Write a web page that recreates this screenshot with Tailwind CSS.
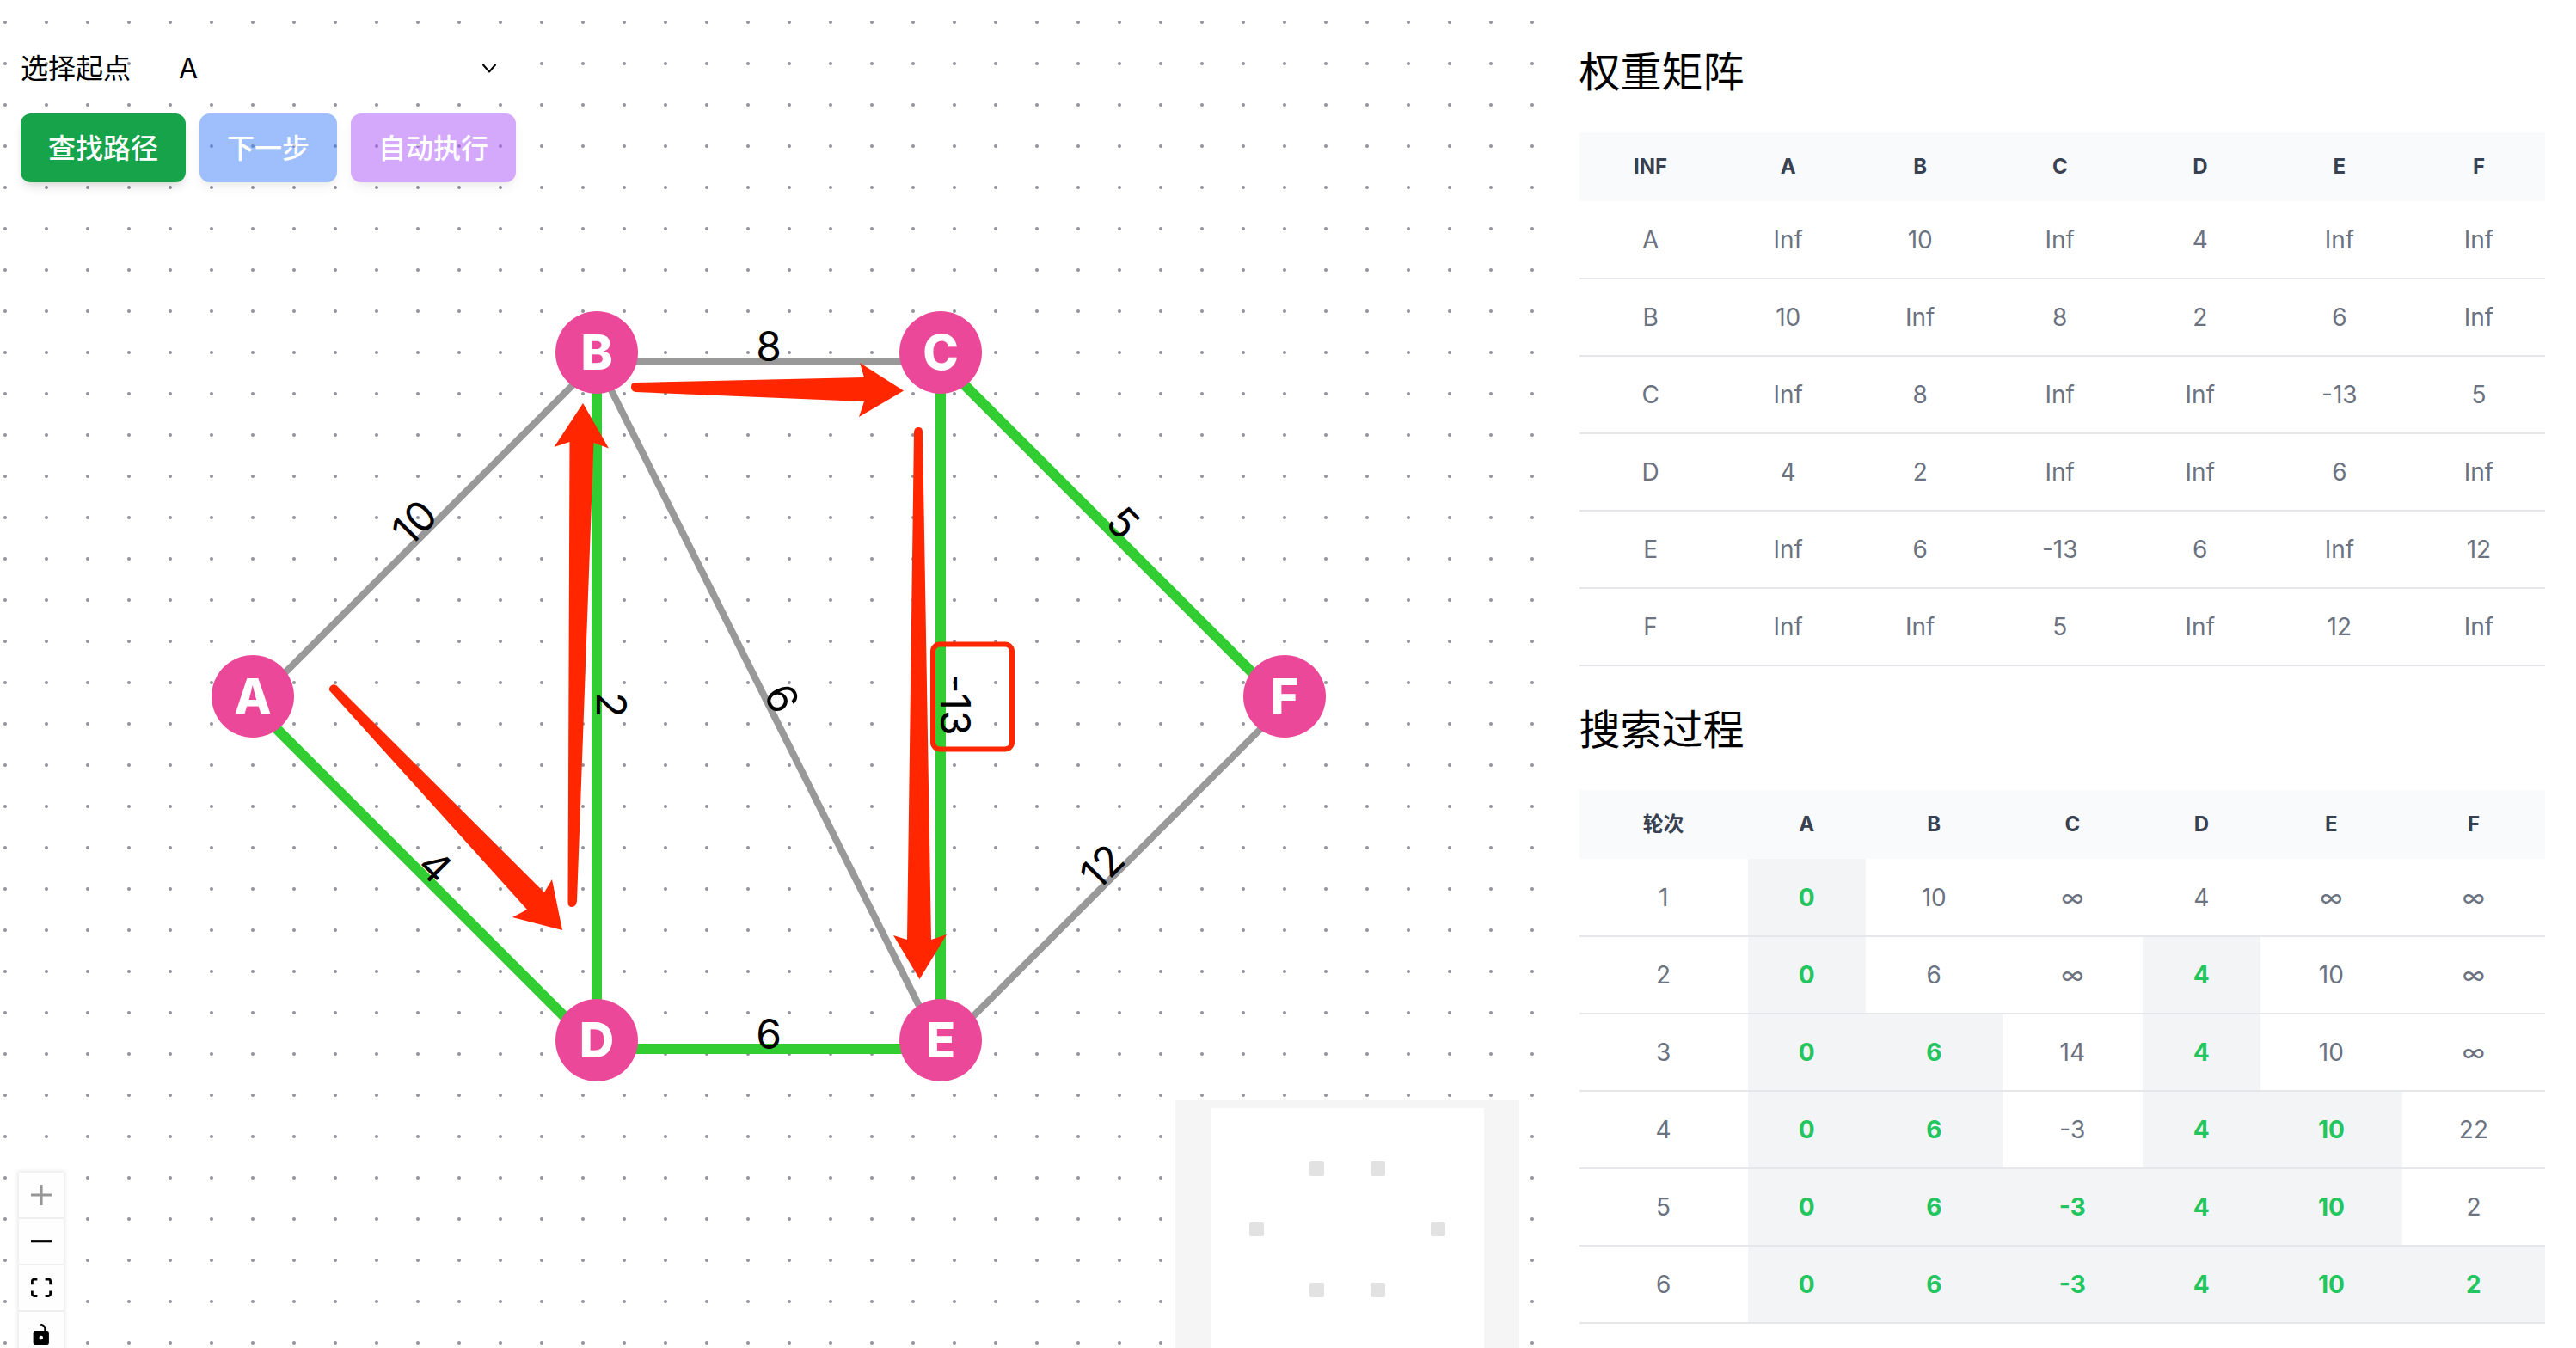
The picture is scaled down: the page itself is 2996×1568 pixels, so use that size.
<!DOCTYPE html>
<html lang="zh-CN">
<head>
<meta charset="utf-8">
<meta name="viewport" content="width=device-width, initial-scale=1">
<title>最短路径</title>
<script src="https://cdn.jsdelivr.net/npm/@tailwindcss/browser@4"></script>
</head>
<body class="bg-white text-black font-['Inter','Noto_Sans_CJK_SC',sans-serif]">
<div class="flex h-screen overflow-hidden">

  <!-- Graph canvas -->
  <main class="relative w-3/5 h-full overflow-hidden">
    <svg class="absolute inset-0 w-full h-full" aria-hidden="true">
      <defs>
        <pattern id="dots" x="-18" y="2" width="48" height="48" patternUnits="userSpaceOnUse">
          <circle cx="24" cy="24" r="2" fill="#91919a"/>
        </pattern>
      </defs>
      <rect width="100%" height="100%" fill="url(#dots)"/>
    </svg>

    <!-- Edges and weights -->
    <svg class="absolute inset-0 w-full h-full" role="img" aria-label="加权图">
      <g stroke="#999" stroke-width="8">
        <path d="M294 820L694 420"/>
        <path d="M694 420H1094"/>
        <path d="M694 420L1094 1220"/>
        <path d="M1094 1220L1494 820"/>
      </g>
      <g stroke="#32cd32" stroke-width="12">
        <path d="M294 820L694 1220"/>
        <path d="M694 420V1220"/>
        <path d="M694 1220H1094"/>
        <path d="M1094 420V1220"/>
        <path d="M1094 420L1494 820"/>
      </g>
      <g class="text-5xl" fill="#000" text-anchor="middle">
        <text transform="translate(494 620) rotate(-45)">10</text>
        <text transform="translate(894 420)">8</text>
        <text transform="translate(494 1020) rotate(45)">4</text>
        <text transform="translate(694 820) rotate(90)">2</text>
        <text transform="translate(894 820) rotate(63.4)">6</text>
        <text transform="translate(894 1220)">6</text>
        <text transform="translate(1094 820) rotate(90)">-13</text>
        <text transform="translate(1294 620) rotate(45)">5</text>
        <text transform="translate(1294 1020) rotate(-45)">12</text>
      </g>
    </svg>

    <!-- Nodes -->
    <div class="text-[56px] leading-none font-extrabold text-white">
      <div class="absolute left-[246px] top-[762px] size-24 rounded-full bg-[#ec4899] flex items-center justify-center">A</div>
      <div class="absolute left-[646px] top-[362px] size-24 rounded-full bg-[#ec4899] flex items-center justify-center">B</div>
      <div class="absolute left-[1046px] top-[362px] size-24 rounded-full bg-[#ec4899] flex items-center justify-center">C</div>
      <div class="absolute left-[646px] top-[1162px] size-24 rounded-full bg-[#ec4899] flex items-center justify-center">D</div>
      <div class="absolute left-[1046px] top-[1162px] size-24 rounded-full bg-[#ec4899] flex items-center justify-center">E</div>
      <div class="absolute left-[1446px] top-[762px] size-24 rounded-full bg-[#ec4899] flex items-center justify-center">F</div>
    </div>

    <!-- Route arrows and highlight -->
    <svg class="absolute inset-0 w-full h-full pointer-events-none" aria-hidden="true">
      <g fill="#ff2600">
        <path d="M391 797L633 1038L642 1023L654 1082L596 1067L613 1058L383 803A5.5 5.5 0 0 1 391 797Z"/>
        <path d="M660.500 1049L662.500 514L644.500 520L678 469L708 521.500L690.500 515L671 1048Q670 1055 665 1055Q660.500 1055 660.500 1049Z"/>
        <path d="M739 445L1005 439L1000 422L1051 454.500L999 485L1005 467L739 456Q734 455 734 450Q734 445 739 445Z"/>
        <path d="M1063 502L1055 1093L1039 1088L1069.500 1139L1101 1087L1083 1093L1073 502Q1073 497 1068 497Q1064 497 1063 502Z"/>
      </g>
      <rect x="1085" y="749.500" width="92" height="122" rx="8" fill="none" stroke="#ff2600" stroke-width="6"/>
    </svg>

    <!-- Toolbar -->
    <div class="absolute left-6 top-12 w-[576px] flex flex-col gap-5 text-[32px] leading-[48px]">
      <div class="flex items-center gap-8">
        <label for="start" class="shrink-0">选择起点</label>
        <div class="relative grow">
          <select id="start" class="block w-full h-16 appearance-none bg-white pl-6 pr-16 rounded-lg">
            <option selected>A</option><option>B</option><option>C</option><option>D</option><option>E</option><option>F</option>
          </select>
          <svg class="absolute right-5 top-5 size-6 pointer-events-none" viewBox="0 0 24 24" fill="none" stroke="#000" stroke-width="2" stroke-linecap="round" stroke-linejoin="round"><path d="M6 7.500L13 15.500L20 7.500"/></svg>
        </div>
      </div>
      <div class="flex gap-4 font-medium text-white">
        <button type="button" class="h-20 px-8 pt-0.5 rounded-xl bg-[#16a34a] shadow-[0_8px_12px_-2px_rgba(0,0,0,0.1),0_4px_8px_-4px_rgba(0,0,0,0.1)]">查找路径</button>
        <button type="button" disabled class="h-20 px-8 pt-0.5 rounded-xl bg-[#3f81fa] opacity-50 shadow-[0_8px_12px_-2px_rgba(0,0,0,0.1),0_4px_8px_-4px_rgba(0,0,0,0.1)]">下一步</button>
        <button type="button" disabled class="h-20 px-8 pt-0.5 rounded-xl bg-[#ab55fb] opacity-50 shadow-[0_8px_12px_-2px_rgba(0,0,0,0.1),0_4px_8px_-4px_rgba(0,0,0,0.1)]">自动执行</button>
      </div>
    </div>

    <!-- Zoom controls -->
    <div class="absolute left-[22px] -bottom-3 w-[52px] flex flex-col shadow-[0_0_4px_2px_rgba(0,0,0,0.08)]">
      <button type="button" disabled aria-label="放大" class="h-[54px] bg-[#fefefe] border-b-2 border-[#eee] flex items-center justify-center"><svg class="size-6 opacity-40" viewBox="0 0 32 32"><path d="M32 18.133H18.133V32h-4.266V18.133H0v-4.266h13.867V0h4.266v13.867H32z"/></svg></button>
      <button type="button" aria-label="缩小" class="h-[54px] bg-[#fefefe] border-b-2 border-[#eee] flex items-center justify-center"><svg class="w-6 h-1" viewBox="0 0 32 5"><path d="M0 0h32v4.2H0z"/></svg></button>
      <button type="button" aria-label="适应视图" class="h-[54px] bg-[#fefefe] border-b-2 border-[#eee] flex items-center justify-center"><svg class="size-6" viewBox="0 0 32 30"><path d="M3.692 4.63c0-.53.4-.938.939-.938h5.215V0H4.708C2.13 0 0 2.054 0 4.63v5.216h3.692V4.631zM27.354 0h-5.2v3.692h5.17c.53 0 .984.4.984.939v5.215H32V4.631A4.624 4.624 0 0027.354 0zm.954 24.83c0 .532-.4.94-.939.94h-5.215v3.768h5.215c2.577 0 4.631-2.13 4.631-4.707v-5.139h-3.692v5.139zm-23.677.94c-.531 0-.939-.4-.939-.94v-5.138H0v5.139c0 2.577 2.13 4.707 4.708 4.707h5.138V25.77H4.631z"/></svg></button>
      <button type="button" aria-label="锁定" class="h-[54px] bg-[#fefefe] border-b-2 border-[#eee] flex items-center justify-center"><svg class="size-6" viewBox="0 0 25 32"><path d="M21.333 10.667H19.81V7.619C19.81 3.429 16.38 0 12.19 0c-4.114 1.828-1.37 2.133.305 2.438 1.676.305 4.42 2.59 4.42 5.181v3.048H3.047A3.056 3.056 0 000 13.714v15.238A3.056 3.056 0 003.048 32h18.285a3.056 3.056 0 003.048-3.048V13.714a3.056 3.056 0 00-3.048-3.047zM12.19 24.533a3.056 3.056 0 01-3.047-3.047 3.056 3.056 0 013.047-3.048 3.056 3.056 0 013.048 3.048 3.056 3.056 0 01-3.048 3.047z"/></svg></button>
    </div>

    <!-- Minimap -->
    <svg class="absolute right-[31px] -bottom-3 w-[400px] h-[300px]" viewBox="0 0 400 300" role="img" aria-label="小地图">
      <rect width="400" height="300" fill="#f5f5f5"/>
      <rect x="41" y="9" width="318" height="281" fill="#fff"/>
      <g fill="#e2e2e2">
        <rect x="156" y="71" width="17" height="17" rx="2"/>
        <rect x="227" y="71" width="17" height="17" rx="2"/>
        <rect x="86" y="142" width="17" height="16" rx="2"/>
        <rect x="297" y="142" width="17" height="16" rx="2"/>
        <rect x="156" y="212" width="17" height="17" rx="2"/>
        <rect x="227" y="212" width="17" height="17" rx="2"/>
      </g>
    </svg>
  </main>

  <!-- Data panel -->
  <aside class="w-2/5 h-full overflow-hidden pt-[10px] pl-[39px] pr-9">
    <h2 class="pt-[42px] pb-[38px] text-5xl leading-[64px]">权重矩阵</h2>
    <table class="w-full table-fixed border-collapse text-center text-[28px] leading-10 text-[#6b7280]">
      <colgroup><col class="w-[166px]"><col class="w-[154px]"><col class="w-[153px]"><col class="w-[172px]"><col class="w-[154px]"><col class="w-[170px]"><col class="w-[154px]"></colgroup>
      <thead class="bg-[#f9fafb] text-2xl leading-8 text-[#374151]">
        <tr class="h-20"><th>INF</th><th>A</th><th>B</th><th>C</th><th>D</th><th>E</th><th>F</th></tr>
      </thead>
      <tbody>
        <tr class="h-[90px] border-b-2 border-[#e5e7eb]"><td>A</td><td>Inf</td><td>10</td><td>Inf</td><td>4</td><td>Inf</td><td>Inf</td></tr>
        <tr class="h-[90px] border-b-2 border-[#e5e7eb]"><td>B</td><td>10</td><td>Inf</td><td>8</td><td>2</td><td>6</td><td>Inf</td></tr>
        <tr class="h-[90px] border-b-2 border-[#e5e7eb]"><td>C</td><td>Inf</td><td>8</td><td>Inf</td><td>Inf</td><td>-13</td><td>5</td></tr>
        <tr class="h-[90px] border-b-2 border-[#e5e7eb]"><td>D</td><td>4</td><td>2</td><td>Inf</td><td>Inf</td><td>6</td><td>Inf</td></tr>
        <tr class="h-[90px] border-b-2 border-[#e5e7eb]"><td>E</td><td>Inf</td><td>6</td><td>-13</td><td>6</td><td>Inf</td><td>12</td></tr>
        <tr class="h-[90px] border-b-2 border-[#e5e7eb]"><td>F</td><td>Inf</td><td>Inf</td><td>5</td><td>Inf</td><td>12</td><td>Inf</td></tr>
      </tbody>
    </table>

    <h2 class="pt-[42px] pb-[38px] text-5xl leading-[64px]">搜索过程</h2>
    <table class="w-full table-fixed border-collapse text-center text-[28px] leading-10 text-[#6b7280] [&_.on]:bg-[#f3f4f6] [&_.on]:font-bold [&_.on]:text-[#22c55e]">
      <colgroup><col class="w-[196px]"><col class="w-[137px]"><col class="w-[159px]"><col class="w-[163px]"><col class="w-[137px]"><col class="w-[165px]"><col class="w-[166px]"></colgroup>
      <thead class="bg-[#f9fafb] text-2xl leading-8 text-[#374151]">
        <tr class="h-20"><th>轮次</th><th>A</th><th>B</th><th>C</th><th>D</th><th>E</th><th>F</th></tr>
      </thead>
      <tbody>
        <tr class="h-[90px] border-b-2 border-[#e5e7eb]"><td>1</td><td class="on">0</td><td>10</td><td>∞</td><td>4</td><td>∞</td><td>∞</td></tr>
        <tr class="h-[90px] border-b-2 border-[#e5e7eb]"><td>2</td><td class="on">0</td><td>6</td><td>∞</td><td class="on">4</td><td>10</td><td>∞</td></tr>
        <tr class="h-[90px] border-b-2 border-[#e5e7eb]"><td>3</td><td class="on">0</td><td class="on">6</td><td>14</td><td class="on">4</td><td>10</td><td>∞</td></tr>
        <tr class="h-[90px] border-b-2 border-[#e5e7eb]"><td>4</td><td class="on">0</td><td class="on">6</td><td>-3</td><td class="on">4</td><td class="on">10</td><td>22</td></tr>
        <tr class="h-[90px] border-b-2 border-[#e5e7eb]"><td>5</td><td class="on">0</td><td class="on">6</td><td class="on">-3</td><td class="on">4</td><td class="on">10</td><td>2</td></tr>
        <tr class="h-[90px] border-b-2 border-[#e5e7eb]"><td>6</td><td class="on">0</td><td class="on">6</td><td class="on">-3</td><td class="on">4</td><td class="on">10</td><td class="on">2</td></tr>
      </tbody>
    </table>
  </aside>
</div>
</body>
</html>
